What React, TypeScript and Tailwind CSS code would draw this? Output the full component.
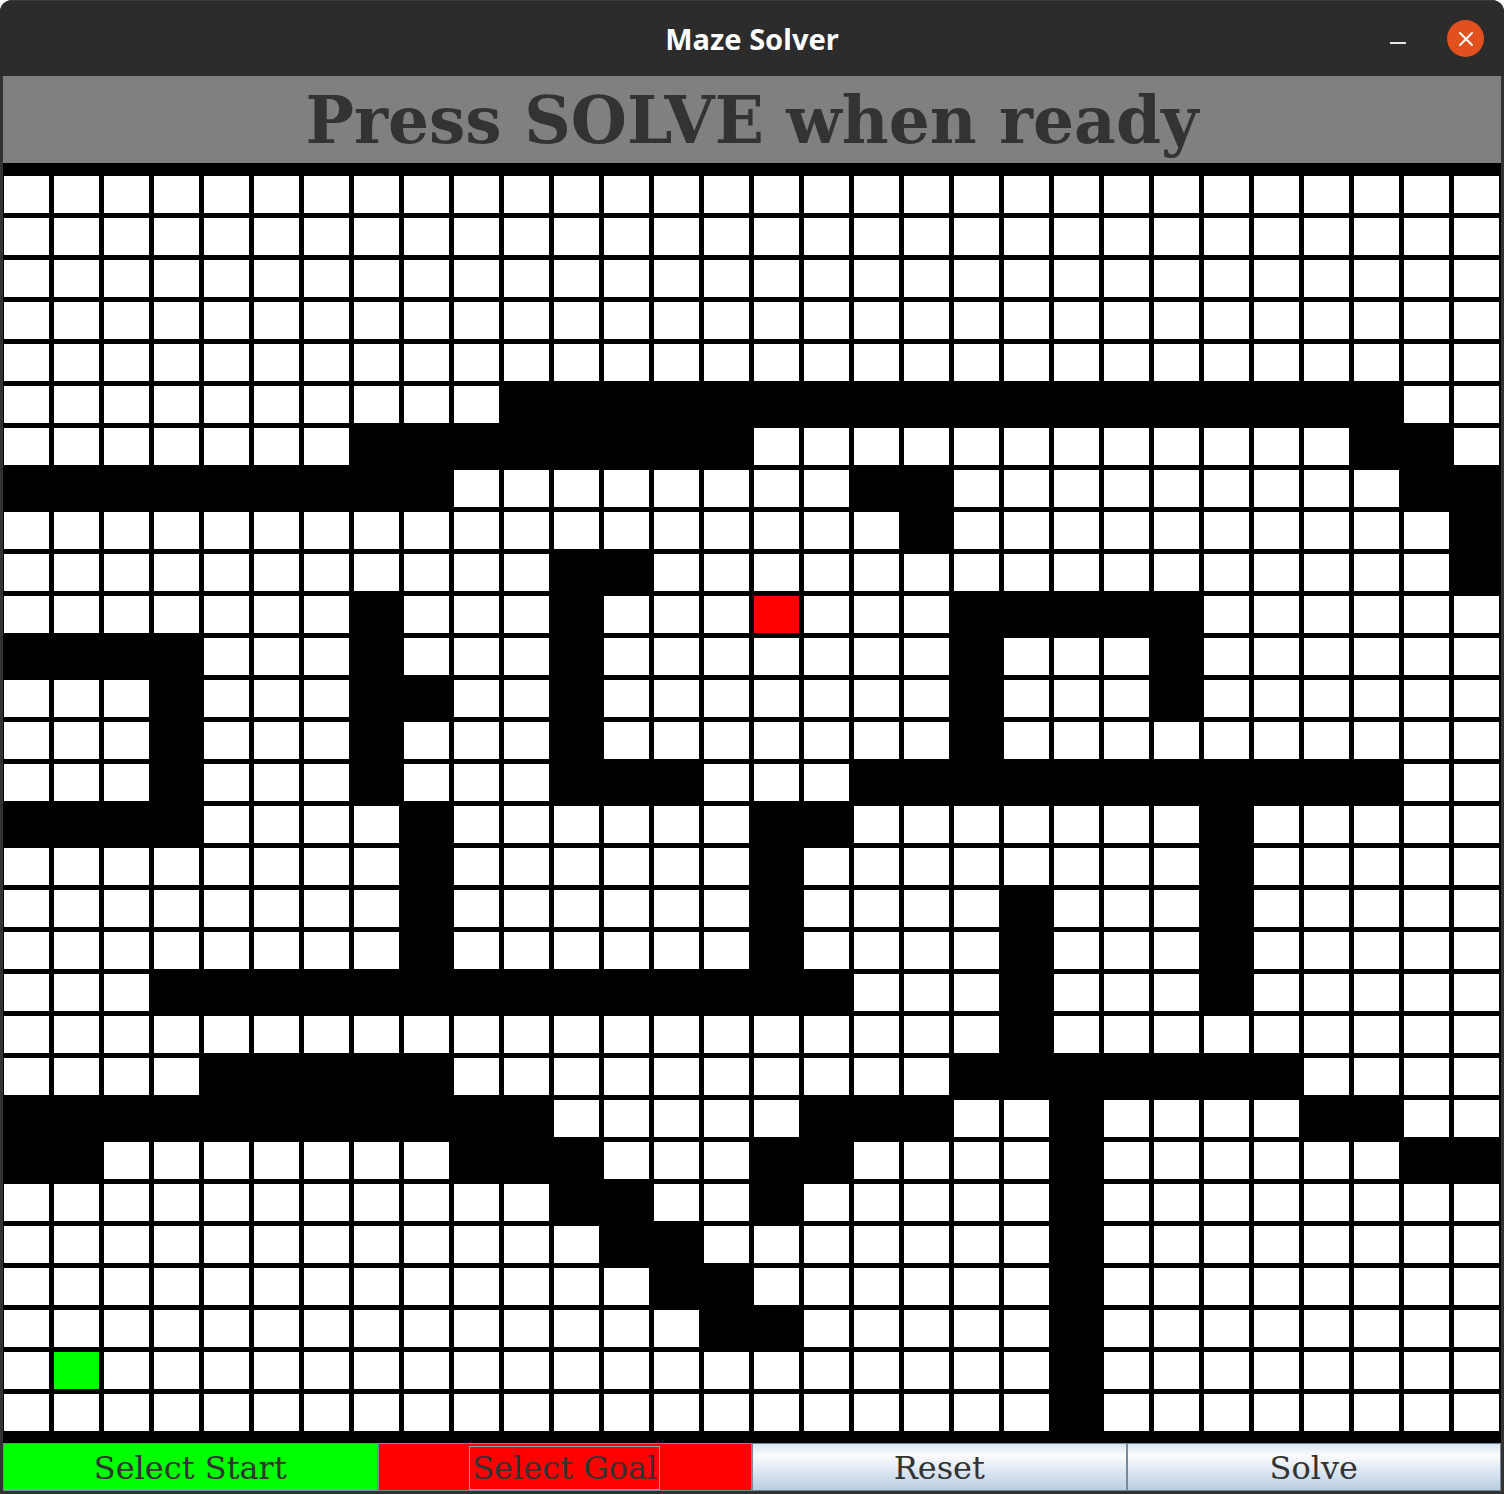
import React from "react";

// run-length rows: "10.18#2." -> 10 open cells, 18 walls, 2 open
const ROWS = [
  "30.",
  "30.",
  "30.",
  "30.",
  "30.",
  "10.18#2.",
  "7.8#12.2#1.",
  "9#8.2#9.2#",
  "18.1#10.1#",
  "11.2#16.1#",
  "7.1#3.1#3.1G3.5#6.",
  "4#3.1#3.1#7.1#3.1#6.",
  "3.1#3.2#2.1#7.1#3.1#6.",
  "3.1#3.1#3.1#7.1#10.",
  "3.1#3.1#3.3#3.11#2.",
  "4#4.1#6.2#7.1#5.",
  "8.1#6.1#8.1#5.",
  "8.1#6.1#4.1#3.1#5.",
  "8.1#6.1#4.1#3.1#5.",
  "3.14#3.1#3.1#5.",
  "20.1#9.",
  "4.5#10.7#4.",
  "11#5.3#2.1#4.2#2.",
  "2#7.3#3.2#4.1#6.2#",
  "11.2#2.1#5.1#8.",
  "12.2#7.1#8.",
  "13.2#6.1#8.",
  "14.2#5.1#8.",
  "1.1S19.1#8.",
  "21.1#8.",
];

function decode(row: string) {
  const out: string[] = [];
  for (const m of row.matchAll(/(\d+)(.)/g)) {
    for (let i = 0; i < Number(m[1]); i++) out.push(m[2]);
  }
  return out;
}

const MAZE = ROWS.map(decode);

function Cell({ kind }: { kind: string }) {
  const fill =
    kind === "#"
      ? "bg-black"
      : kind === "S"
        ? "bg-[#00ff00]"
        : kind === "G"
          ? "bg-[#ff0000]"
          : "bg-white";
  return (
    <div className="h-[42px] w-[50px] shrink-0">
      <div className={`h-[37px] w-[45px] ${fill}`} />
    </div>
  );
}

function TitleBar() {
  return (
    <div className="relative flex h-[76px] shrink-0 items-center justify-center rounded-t-[12px] border-t border-[#3d3d3d] bg-[#2c2c2c]">
      <span className="font-['Noto_Sans',sans-serif] text-[29px] font-bold leading-none text-white">
        Maze Solver
      </span>
      <div className="absolute right-[98px] top-[41px] h-[2px] w-[16px] bg-[#e6e6e6]" />
      <div className="absolute right-[20px] top-[19px] flex h-[37px] w-[37px] items-center justify-center rounded-full bg-[#e2501d]">
        <svg width="16" height="16" viewBox="0 0 16 16">
          <path d="M2 2 L14 14 M14 2 L2 14" stroke="white" strokeWidth="2" strokeLinecap="round" />
        </svg>
      </div>
    </div>
  );
}

export default function App() {
  const serif = "font-['DejaVu_Serif',serif]";

  return (
    <div className="h-[1494px] w-[1504px] bg-white">
      <div className="flex h-full flex-col rounded-t-[12px] bg-[#323232]">
        <TitleBar />

        <div className="flex flex-1 flex-col px-[3px] pb-[3px]">
          <div className="flex h-[87px] items-center justify-center bg-[#808080]">
            <h1 className={`${serif} pt-[2px] text-[64.5px] font-bold leading-none text-[#333333]`}>
              Press SOLVE when ready
            </h1>
          </div>

          <div className="overflow-hidden bg-black pb-[7px] pl-[1px] pt-[13px]">
            {MAZE.map((row, r) => (
              <div key={r} className="flex">
                {row.map((k, c) => (
                  <Cell key={c} kind={k} />
                ))}
              </div>
            ))}
          </div>

          <div className={`${serif} grid h-[48px] grid-cols-4 text-[32px] leading-none text-[#333333]`}>
            <button className="flex items-center justify-center border border-[#7a8a99] bg-[#00ff00] pt-[2px]">
              Select Start
            </button>
            <button className="flex items-center justify-center border border-[#7a8a99] bg-[#ff0000] pt-[2px]">
              <span className="border border-[#8fa3b8] px-[2px] py-[5px]">Select Goal</span>
            </button>
            <button className="flex items-center justify-center border border-[#7a8a99] bg-linear-to-b from-[#d9e5f1] via-[#fbfcfe] via-25% to-[#b9cde2] pt-[2px]">
              Reset
            </button>
            <button className="flex items-center justify-center border border-[#7a8a99] bg-linear-to-b from-[#d9e5f1] via-[#fbfcfe] via-25% to-[#b9cde2] pt-[2px]">
              Solve
            </button>
          </div>
        </div>
      </div>
    </div>
  );
}
